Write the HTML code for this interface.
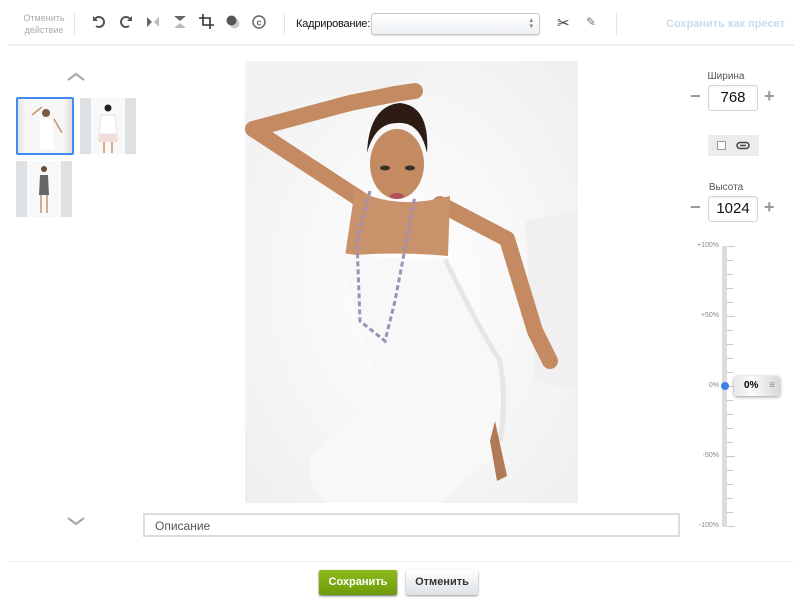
<!DOCTYPE html>
<html><head><meta charset="utf-8"><style>
*{box-sizing:border-box;margin:0;padding:0}
body{width:801px;height:600px;background:#fff;font-family:"Liberation Sans",sans-serif;position:relative;overflow:hidden}
.a{position:absolute}
.sep{position:absolute;width:1px;background:#e4e4e4}
.ic{position:absolute;top:15px}
.tick{position:absolute;left:727px;height:1px;width:6px;background:#c8c8c8}
.lbl{position:absolute;font-size:7px;color:#888;width:40px;text-align:right}
.num{position:absolute;width:50px;height:26px;border:1px solid #d5d5d5;border-radius:3px;font-size:15px;text-align:center;line-height:24px;color:#111;box-shadow:inset 0 1px 2px #eee}
.pm{position:absolute;color:#999;font-size:18px;font-weight:bold}
</style></head><body>
<div class="a" style="left:22px;top:12px;font-size:9px;color:#aaa;line-height:12px;text-align:center;width:44px">Отменить действие</div>
<div class="sep" style="left:74px;top:13px;height:22px"></div>
<svg class="ic" style="left:92px" width="14" height="14" viewBox="0 0 14 14"><path d="M3 4 A5 5 0 1 1 4 11" fill="none" stroke="#555" stroke-width="2"/><path d="M1 1 L1 6 L6 6Z" fill="#555"/></svg>
<svg class="ic" style="left:119px" width="14" height="14" viewBox="0 0 14 14"><path d="M11 4 A5 5 0 1 0 10 11" fill="none" stroke="#555" stroke-width="2"/><path d="M13 1 L13 6 L8 6Z" fill="#555"/></svg>
<svg class="ic" style="left:147px" width="12" height="14" viewBox="0 0 12 14"><path d="M0 2 L5 7 L0 12Z" fill="#666"/><path d="M12 2 L7 7 L12 12Z" fill="#bbb"/></svg>
<svg class="ic" style="left:173px" width="14" height="14" viewBox="0 0 14 14"><path d="M1 1 H13 L7 6Z" fill="#666"/><path d="M1 13 H13 L7 8Z" fill="#bbb"/></svg>
<svg class="ic" style="left:199px;top:14px" width="15" height="15" viewBox="0 0 15 15"><path d="M4 0 V11 H15 M0 4 H11 V15" fill="none" stroke="#333" stroke-width="1.6"/></svg>
<svg class="ic" style="left:226px" width="14" height="14" viewBox="0 0 14 14"><circle cx="8.5" cy="8.5" r="5" fill="#ccc"/><circle cx="5.5" cy="5.5" r="5" fill="#555"/></svg>
<svg class="ic" style="left:252px" width="14" height="14" viewBox="0 0 14 14"><circle cx="7" cy="7" r="6" fill="none" stroke="#666" stroke-width="1.5"/><text x="7" y="10.5" font-size="9" font-weight="bold" text-anchor="middle" fill="#666" font-family="Liberation Sans">c</text></svg>
<div class="sep" style="left:284px;top:13px;height:22px"></div>
<div class="a" style="left:296px;top:18px;font-size:11px;color:#111;letter-spacing:-0.2px">Кадрирование:</div>
<div class="a" style="left:371px;top:13px;width:169px;height:22px;border:1px solid #c8c8c8;border-radius:3px;background:linear-gradient(#fff,#eef1f4);box-shadow:0 1px 1px #ddd"><span style="position:absolute;right:6px;top:4px;font-size:7px;color:#777;line-height:6px">▴<br>▾</span></div>
<div class="a" style="left:557px;top:14px;font-size:15px;color:#333">✂</div>
<div class="a" style="left:586px;top:15px;font-size:12px;color:#777">✎</div>
<div class="sep" style="left:616px;top:13px;height:22px"></div>
<div class="a" style="left:666px;top:18px;font-size:11px;font-weight:bold;color:#c8dced">Сохранить как пресет</div>
<div class="a" style="left:8px;top:44px;width:786px;height:2px;background:#f0f0f0"></div>

<svg class="a" style="left:66px;top:72px" width="20" height="10"><path d="M2 8 L10 2 L18 8" fill="none" stroke="#aaa" stroke-width="2.2"/></svg>
<svg class="a" style="left:66px;top:516px" width="20" height="10"><path d="M2 2 L10 8 L18 2" fill="none" stroke="#aaa" stroke-width="2.2"/></svg>
<div class="a" style="left:16px;top:97px;width:58px;height:58px;border:2px solid #3d8ef0;border-radius:2px;background:linear-gradient(90deg,#e6e6e6 0,#f6f6f6 15%,#f6f6f6 85%,#e0dcd8 100%)"><svg width="54" height="54"><circle cx="28" cy="14" r="4" fill="#7a5a44"/><path d="M14 16 L24 8 M36 20 L44 34" stroke="#c9926a" stroke-width="1.5"/><path d="M22 20 H34 L36 50 H22Z" fill="#fff"/></svg></div>
<div class="a" style="left:80px;top:98px;width:56px;height:56px;background:linear-gradient(90deg,#dde1e4 0,#dde1e4 20%,#f8f8f8 20%,#f8f8f8 80%,#dde1e4 80%)"><svg width="56" height="56"><circle cx="28" cy="10" r="3.5" fill="#222"/><path d="M21 17 H35 L37 36 H19Z" fill="#fff" stroke="#e4e4e4"/><path d="M19 36 H37 L38 44 H18Z" fill="#f0dcd8"/><path d="M24 44 V55 M32 44 V55" stroke="#c9926a" stroke-width="1.5"/></svg></div>
<div class="a" style="left:16px;top:161px;width:56px;height:56px;background:linear-gradient(90deg,#dde1e4 0,#dde1e4 20%,#f8f8f8 20%,#f8f8f8 80%,#dde1e4 80%)"><svg width="56" height="56"><circle cx="28" cy="8" r="3" fill="#6a4a34"/><path d="M24 14 H32 L33 34 H23Z" fill="#666"/><path d="M25 34 V52 M31 34 V52" stroke="#c9926a" stroke-width="1.5"/></svg></div>

<svg class="a" style="left:245px;top:61px" width="333" height="442" viewBox="0 0 333 442">
<defs><radialGradient id="bg" cx="50%" cy="50%" r="70%"><stop offset="0" stop-color="#fff"/><stop offset="1" stop-color="#efefef"/></radialGradient></defs>
<rect width="333" height="442" fill="url(#bg)"/>
<path d="M0 0 H180 L170 25 L60 35 L0 55Z" fill="#f2f2f2"/>
<path d="M280 160 L333 150 V330 L290 320Z" fill="#f0f0f0"/>
<polyline points="118,140 8,68 105,42 150,33 170,30" fill="none" stroke="#c48a62" stroke-width="16" stroke-linejoin="round" stroke-linecap="round"/>
<polyline points="195,143 262,178 290,270 305,300" fill="none" stroke="#c48a62" stroke-width="16" stroke-linejoin="round" stroke-linecap="round"/>
<path d="M110 128 Q150 150 205 135 L203 195 Q150 190 100 195Z" fill="#c9926a"/>
<ellipse cx="152" cy="103" rx="27" ry="35" fill="#c48a62"/>
<path d="M122 92 Q124 45 155 42 Q185 45 182 92 Q175 60 152 62 Q130 62 122 92Z" fill="#2d1c14"/>
<ellipse cx="140" cy="107" rx="5" ry="2.5" fill="#332"/><ellipse cx="165" cy="107" rx="5" ry="2.5" fill="#332"/>
<ellipse cx="152" cy="135" rx="7" ry="3" fill="#b0505a"/>
<path d="M97 192 Q150 200 200 198 Q225 260 255 300 Q265 340 255 390 Q220 420 195 442 H80 Q60 420 65 395 Q100 360 140 330 Q110 270 97 192Z" fill="#f8f8f8"/>
<path d="M200 198 Q230 260 255 300 Q262 340 255 380" fill="none" stroke="#e6e6e6" stroke-width="5"/>
<path d="M250 360 L262 415 L252 420 L245 380Z" fill="#b07a56"/>
<path d="M125 130 L112 180 L115 260 L140 280 L150 240 L170 135" fill="none" stroke="#a090b5" stroke-width="3" stroke-dasharray="5 3"/>
</svg>

<div class="a" style="left:143px;top:513px;width:537px;height:24px;border:2px solid #dcdcdc;font-size:12px;color:#555;padding:4px 10px">Описание</div>

<div class="a" style="left:700px;top:71px;width:52px;text-align:center;font-size:10px;color:#555">Ширина</div>
<div class="pm" style="left:690px;top:86px">−</div>
<div class="num" style="left:708px;top:85px">768</div>
<div class="pm" style="left:764px;top:86px">+</div>
<div class="a" style="left:708px;top:135px;width:51px;height:21px;background:#ececec"><div class="a" style="left:9px;top:6px;width:9px;height:9px;border:1px solid #999;background:#fff"></div><svg class="a" style="left:28px;top:6px" width="14" height="9"><rect x="1" y="1.5" width="12" height="6" rx="3" fill="none" stroke="#444" stroke-width="1.5"/><path d="M4 4.5 H10" stroke="#444" stroke-width="1.5"/></svg></div>
<div class="a" style="left:700px;top:182px;width:52px;text-align:center;font-size:10px;color:#555">Высота</div>
<div class="pm" style="left:690px;top:197px">−</div>
<div class="num" style="left:708px;top:196px">1024</div>
<div class="pm" style="left:764px;top:197px">+</div>

<div class="a" style="left:722px;top:246px;width:5px;height:281px;background:#dcdcdc;border-radius:2px"></div>
<div id="ticks"></div>
<div class="lbl" style="left:679px;top:242px">+100%</div>
<div class="lbl" style="left:679px;top:312px">+50%</div>
<div class="lbl" style="left:679px;top:382px">0%</div>
<div class="lbl" style="left:679px;top:452px">-50%</div>
<div class="lbl" style="left:679px;top:522px">-100%</div>
<div class="a" style="left:721px;top:382px;width:8px;height:8px;border-radius:50%;background:#3d7ee8"></div>
<div class="a" style="left:734px;top:376px;width:46px;height:20px;border-radius:3px;background:linear-gradient(90deg,#e8e8e8,#fafafa 40%,#d8d8d8);box-shadow:0 1px 3px #999;font-size:10px;font-weight:bold;line-height:20px;padding-left:10px">0%<span style="position:absolute;right:5px;top:0;color:#888;font-weight:normal">≡</span></div>

<div class="a" style="left:8px;top:561px;width:786px;height:1px;background:#eee"></div>
<div class="a" style="left:319px;top:570px;width:78px;height:25px;border-radius:2px;background:linear-gradient(#8dbb1a,#6e9a0a);box-shadow:0 1px 2px #666;color:#fff;font-size:11px;font-weight:bold;text-align:center;line-height:25px">Сохранить</div>
<div class="a" style="left:406px;top:570px;width:72px;height:25px;border-radius:2px;background:linear-gradient(#fff,#dde2e6);box-shadow:0 1px 2px #999;color:#333;font-size:11px;font-weight:bold;text-align:center;line-height:25px">Отменить</div>
<script>
var h='';for(var i=0;i<=20;i++){var y=246+i*14;h+='<div class="tick" style="top:'+y+'px;'+(i%5==0?'width:8px':'')+'"></div>';}
document.getElementById('ticks').innerHTML=h;
</script>
</body></html>
